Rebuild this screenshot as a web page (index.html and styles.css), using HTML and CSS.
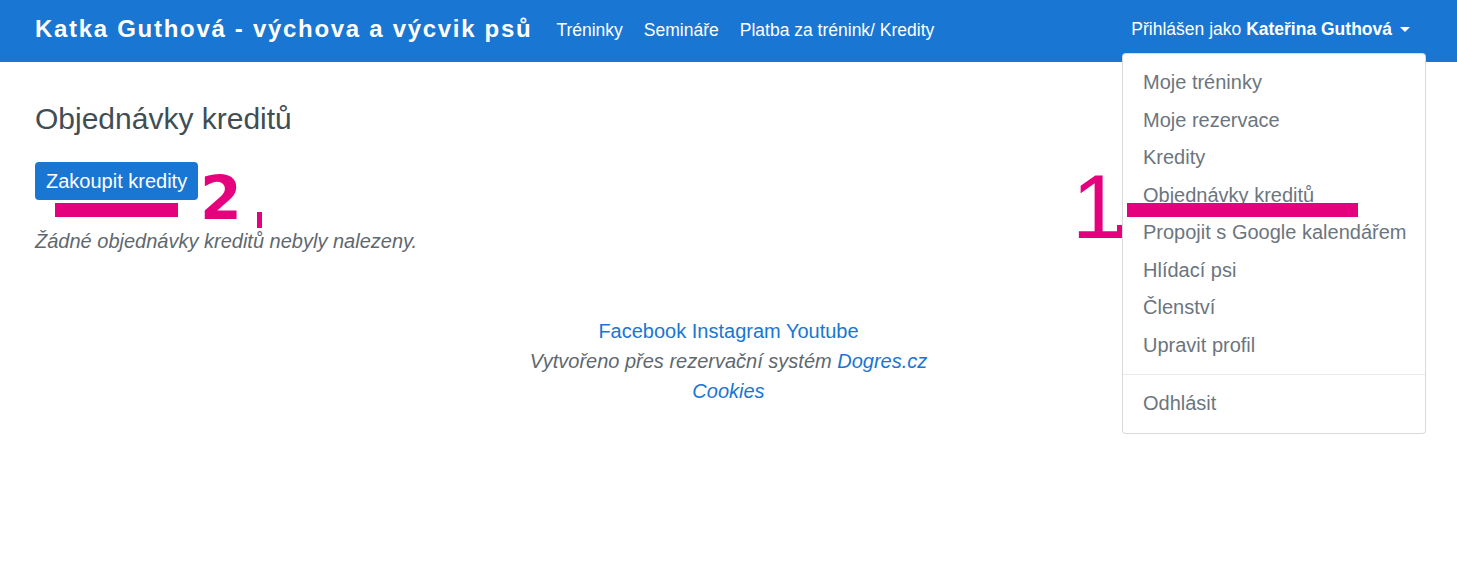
FILE: index.html
```html
<!DOCTYPE html>
<html lang="cs">
<head>
  <meta charset="UTF-8">
  <meta name="viewport" content="width=device-width, initial-scale=1.0">
  <title>Objednávky kreditů</title>
  <link rel="stylesheet" href="styles.css">
</head>
<body>

<nav class="navbar">
  <a class="brand" href="#">Katka Guthová - výchova a výcvik psů</a>
  <ul class="nav-links">
    <li><a href="#">Tréninky</a></li>
    <li><a href="#">Semináře</a></li>
    <li><a href="#">Platba za trénink/ Kredity</a></li>
  </ul>
  <a class="user-toggle" href="#">Přihlášen jako <b>Kateřina Guthová</b><span class="caret"></span></a>

  <div class="dropdown">
    <a href="#">Moje tréninky</a>
    <a href="#">Moje rezervace</a>
    <a href="#">Kredity</a>
    <a href="#">Objednávky kreditů</a>
    <a href="#">Propojit s Google kalendářem</a>
    <a href="#">Hlídací psi</a>
    <a href="#">Členství</a>
    <a href="#">Upravit profil</a>
    <div class="divider"></div>
    <a href="#">Odhlásit</a>
  </div>
</nav>

<main class="content">
  <h3>Objednávky kreditů</h3>
  <a class="btn" href="#">Zakoupit kredity</a>
  <p class="empty">Žádné objednávky kreditů nebyly nalezeny.</p>
</main>

<footer class="footer">
  <div><a href="#">Facebook</a> <a href="#">Instagram</a> <a href="#">Youtube</a></div>
  <div class="made">Vytvořeno přes rezervační systém <a href="#">Dogres.cz</a></div>
  <div class="made"><a href="#">Cookies</a></div>
</footer>

<!-- hand drawn marks on top of the screenshot -->
<div class="marks">
  <span class="mark-bar bar-one"></span>
  <span class="mark-num num-one">1</span>
  <span class="mark-tick tick-one"></span>
  <span class="mark-bar bar-two"></span>
  <span class="mark-num num-two">2</span>
  <span class="mark-tick tick-two"></span>
</div>

</body>
</html>
```

FILE: styles.css
```css
html,
body {
  min-height: 100%;
}

body {
  margin: 0;
  min-height: 572px;
  font-family: "Liberation Sans", Arial, sans-serif;
  font-size: 20px;
  line-height: 1.5;
  color: #212529;
  background: #fff;
}

a {
  text-decoration: none;
}

/* Top bar */
.navbar {
  position: relative;
  display: flex;
  align-items: center;
  height: 58px;
  padding: 0 35px 4px;
  background-color: #1976d2;
}

.brand {
  color: #fff;
  font-size: 24px;
  font-weight: bold;
  letter-spacing: 1.7px;
  margin-right: 24px;
}

.nav-links {
  display: flex;
  gap: 21px;
  list-style: none;
  margin: 0;
  padding: 0;
}

.nav-links a {
  color: #fff;
  font-size: 17.5px;
}

.user-toggle {
  margin-left: auto;
  margin-right: 12px;
  color: #fff;
  font-size: 17.5px;
}

.caret {
  display: inline-block;
  margin-left: 8px;
  vertical-align: 3px;
  border-top: 5.5px solid #fff;
  border-left: 5.5px solid transparent;
  border-right: 5.5px solid transparent;
}

/* Open user menu */
.dropdown {
  position: absolute;
  top: 53px;
  right: 31px;
  width: 302px;
  padding: 10px 0;
  background: #fff;
  border: 1px solid rgba(0, 0, 0, 0.15);
  border-radius: 4px;
  z-index: 2;
}

.dropdown a {
  display: block;
  padding: 5px 20px;
  line-height: 27.5px;
  color: #6c757d;
  white-space: nowrap;
}

.dropdown .divider {
  height: 1px;
  margin: 10px 0;
  background: #e9ecef;
}

/* Page body */
.content {
  padding: 0 35px;
}

.content h3 {
  margin: 38px 0 24px;
  font-size: 30px;
  font-weight: normal;
  line-height: 38px;
  color: #3f4e55;
}

.btn {
  display: inline-block;
  padding: 5px 11px;
  line-height: 28px;
  color: #fff;
  background-color: #1976d2;
  border-radius: 4px;
}

.empty {
  margin: 26px 0 0;
  font-style: italic;
  color: #5f686e;
}

.footer {
  margin-top: 60px;
  text-align: center;
  line-height: 30px;
}

.footer a {
  color: #1976d2;
}

.footer .made {
  font-style: italic;
  color: #5f686e;
}

/* Pink marker annotations */
.marks {
  position: absolute;
  top: 0;
  left: 0;
  z-index: 3;
}

.mark-bar,
.mark-tick {
  position: absolute;
  background: #e5007d;
}

.bar-one {
  left: 1127px;
  top: 203px;
  width: 231px;
  height: 14px;
}

.bar-two {
  left: 55px;
  top: 203px;
  width: 123px;
  height: 14px;
}

.mark-num {
  position: absolute;
  color: #e5007d;
  line-height: 1;
}

.num-one {
  left: 1072px;
  top: 162px;
  font-family: "Liberation Sans", Arial, sans-serif;
  font-size: 90px;
}

.num-two {
  left: 200px;
  top: 168px;
  font-family: "DejaVu Sans", sans-serif;
  font-weight: bold;
  font-size: 60px;
}

.tick-one {
  left: 1117px;
  top: 225px;
  width: 5px;
  height: 13px;
}

.tick-two {
  left: 257px;
  top: 212px;
  width: 5px;
  height: 16px;
}
```
